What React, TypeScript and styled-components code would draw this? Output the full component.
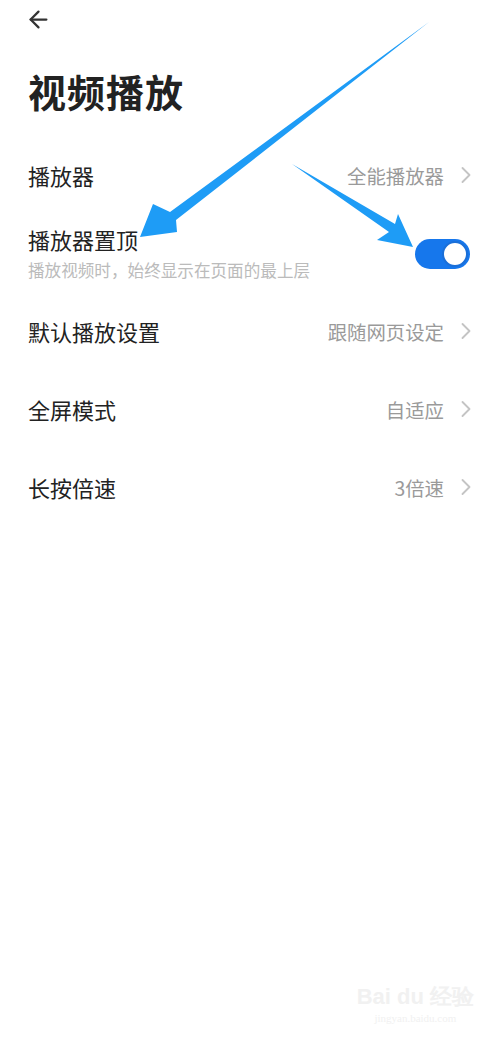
import React from "react";
import styled, {createGlobalStyle} from "styled-components";
import {ArrowLeft, ChevronRight} from "lucide-react";

const GlobalStyle = createGlobalStyle`
    html, body {
        margin: 0;
        padding: 0;
        background: #fff;
    }
    body {
        font-family: "Noto Sans CJK SC", "Noto Sans", sans-serif;
    }
`

const Page = styled.div`
    position: relative;
    width: 500px;
    height: 1038px;
    overflow: hidden;
    background: #fff;
    padding: 0 30px 0 28px;
    box-sizing: border-box;
`

const TopBar = styled.div`
    height: 38px;
    display: flex;
    align-items: center;
    color: #333;
    margin-left: -3px;
`

const Title = styled.h1`
    margin: 26px 0 19px;
    font-size: 38px;
    line-height: 53px;
    font-weight: 700;
    color: #222;
    letter-spacing: 1px;
`

const Row = styled.div`
    height: 78px;
    display: flex;
    align-items: center;
    justify-content: space-between;
`

const LabelBox = styled.div`
    display: flex;
    flex-direction: column;
`

const Label = styled.div`
    font-size: 22px;
    line-height: 30px;
    color: #222;
`

const Hint = styled.div`
    font-size: 16.6px;
    line-height: 24px;
    color: #bbb;
    margin-top: 4px;
`

const Value = styled.div`
    display: flex;
    align-items: center;
    gap: 8px;
    font-size: 19.4px;
    color: #9a9a9a;
    svg {
        color: #c4c4c4;
        margin-right: -10px;
    }
`

const Toggle = styled.div<{on: boolean}>`
    width: 55px;
    height: 30px;
    border-radius: 15px;
    background: ${p => p.on ? "#1677ec" : "#ddd"};
    display: flex;
    align-items: center;
    justify-content: ${p => p.on ? "flex-end" : "flex-start"};
    padding: 0 2px;
    box-sizing: border-box;
    margin-top: 2px;

    .knob {
        width: 26px;
        height: 26px;
        border-radius: 50%;
        background: #fff;
        border: 2px solid #1a6fd8;
        box-sizing: border-box;
    }
`

const Overlay = styled.svg`
    position: absolute;
    left: 0;
    top: 0;
    pointer-events: none;
`

const Watermark = styled.div`
    position: absolute;
    right: 26px;
    bottom: 14px;
    display: flex;
    flex-direction: column;
    align-items: center;
    color: #f1f1f1;
    font-family: "Liberation Serif", serif;
    .logo {
        font-size: 22px;
        font-weight: 700;
        font-family: "Liberation Sans", sans-serif;
    }
    .site {
        font-size: 11px;
    }
`

const rows = [
    {label: "默认播放设置", value: "跟随网页设定"},
    {label: "全屏模式", value: "自适应"},
    {label: "长按倍速", value: "3倍速"},
]

function App() {
    return (
        <Page>
            <GlobalStyle/>
            <TopBar>
                <ArrowLeft size={27} strokeWidth={2}/>
            </TopBar>
            <Title>视频播放</Title>
            <Row>
                <Label>播放器</Label>
                <Value>全能播放器<ChevronRight size={28} strokeWidth={1.6}/></Value>
            </Row>
            <Row>
                <LabelBox>
                    <Label>播放器置顶</Label>
                    <Hint>播放视频时，始终显示在页面的最上层</Hint>
                </LabelBox>
                <Toggle on={true}>
                    <div className="knob"/>
                </Toggle>
            </Row>
            {rows.map(r => (
                <Row key={r.label}>
                    <Label>{r.label}</Label>
                    <Value>{r.value}<ChevronRight size={28} strokeWidth={1.6}/></Value>
                </Row>
            ))}
            <Overlay width={500} height={1038} viewBox="0 0 500 1038">
                <polygon fill="#1e9cf6"
                         points="429,22 170,212 153,204 140,237 177,232 176,220"/>
                <polygon fill="#1e9cf6"
                         points="292,164 395,224 398,214 413,247 377,240 389,232"/>
            </Overlay>
            <Watermark>
                <div className="logo">Bai du 经验</div>
                <div className="site">jingyan.baidu.com</div>
            </Watermark>
        </Page>
    );
}

export default App;
